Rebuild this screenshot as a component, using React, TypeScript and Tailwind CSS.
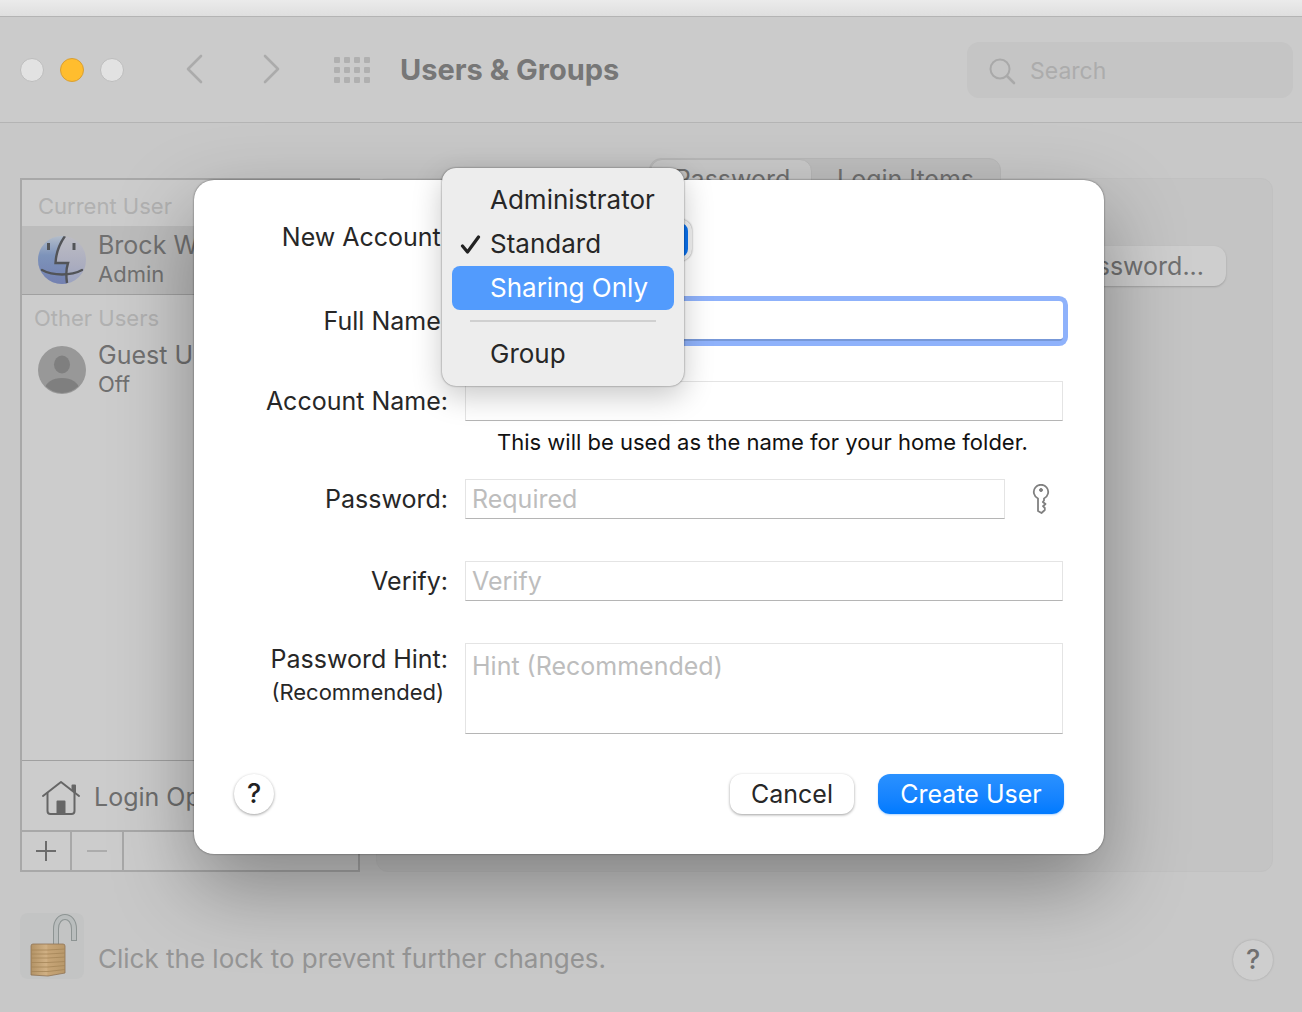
import { useState } from "react";
import type { ReactNode } from "react";

const accountTypes = ["Administrator", "Standard", "Sharing Only"];

const fieldClass =
  "h-10 border border-[#e4e4e4] border-b-[#b5b5b5] bg-white px-1.5 text-[25px] text-[#272727] outline-none placeholder:text-[#bdbdbd]";

interface RowProps {
  id: string;
  label: string;
  children: ReactNode;
}

function Row({ id, label, children }: RowProps) {
  return (
    <div className="flex items-center gap-[17px]">
      <label
        htmlFor={id}
        className="w-[254px] shrink-0 text-right text-[25px] leading-10 text-[#272727]"
      >
        {label}
      </label>
      {children}
    </div>
  );
}

function FinderFace() {
  return (
    <svg viewBox="0 0 48 48" className="size-12 shrink-0">
      <defs>
        <linearGradient id="faceLeft" x1="0" y1="0" x2="0" y2="1">
          <stop offset="0" stopColor="#b3bdca" />
          <stop offset="0.4" stopColor="#7d93ba" />
          <stop offset="1" stopColor="#7380b0" />
        </linearGradient>
        <linearGradient id="faceRight" x1="0" y1="0" x2="0" y2="1">
          <stop offset="0" stopColor="#bdbdc4" />
          <stop offset="0.6" stopColor="#abadbf" />
          <stop offset="1" stopColor="#9ba3c0" />
        </linearGradient>
        <clipPath id="faceClip">
          <circle cx="24" cy="24" r="24" />
        </clipPath>
      </defs>
      <g clipPath="url(#faceClip)">
        <rect width="48" height="48" fill="url(#faceRight)" />
        <path
          d="M0 0H27C22 7 18 17 17.500 27H30C28 33 28 40 29 48H0Z"
          fill="url(#faceLeft)"
        />
        <g fill="none" stroke="#525458" strokeWidth="2.400">
          <path d="M27 0C22 7 18 17 17.500 27H30C28 33 28 40 29 47" />
          <path d="M4 34C15 40 33 40 44 34" strokeLinecap="round" />
          <path d="M10.500 7V14M36 7V14" strokeWidth="3" />
        </g>
      </g>
    </svg>
  );
}

function GuestAvatar() {
  return (
    <svg viewBox="0 0 48 48" className="size-12 shrink-0">
      <clipPath id="guestClip">
        <circle cx="24" cy="24" r="23" />
      </clipPath>
      <circle cx="24" cy="24" r="24" fill="#989898" />
      <g fill="#7f7f7f" clipPath="url(#guestClip)">
        <ellipse cx="24" cy="18.500" rx="8" ry="9" />
        <ellipse cx="24" cy="43" rx="17" ry="11" />
      </g>
    </svg>
  );
}

function HouseIcon() {
  return (
    <svg
      viewBox="0 0 38 36"
      className="h-9 w-[38px] shrink-0"
      fill="none"
      stroke="#666666"
      strokeWidth="2"
      strokeLinecap="round"
      strokeLinejoin="round"
    >
      <path d="M1 16L19 2L37 16" />
      <path d="M5.500 13V31Q5.500 34 8.500 34H29.500Q32.500 34 32.500 31V13" />
      <path d="M30.500 5.500H33V12L30.500 10Z" fill="#666666" />
      <path d="M15.500 21.500H22.500V33H15.500Z" fill="#666666" />
    </svg>
  );
}

function LockIcon() {
  return (
    <svg viewBox="0 0 64 66" className="h-[66px] w-16 shrink-0">
      <defs>
        <linearGradient id="brass" x1="0" y1="0" x2="1" y2="0">
          <stop offset="0" stopColor="#b39366" />
          <stop offset="0.45" stopColor="#d0b084" />
          <stop offset="0.5" stopColor="#c7a577" />
          <stop offset="1" stopColor="#b8986a" />
        </linearGradient>
      </defs>
      <path
        d="M36 32V16C36 0 54 0 54 16V28"
        fill="none"
        stroke="#8d9493"
        strokeWidth="6"
      />
      <path
        d="M36 32V16C36 0 54 0 54 16V27"
        fill="none"
        stroke="#b9bdbd"
        strokeWidth="4"
      />
      <path
        d="M11 33Q11 31 13 31H43Q45 31 45 33V60L28 63L11 62Z"
        fill="url(#brass)"
        stroke="#8f7355"
        strokeWidth="0.800"
      />
      <path
        d="M11 37H28L45 36M11 41H28L45 40M11 45H28L45 44M11 49.500H28L45 48.500M11 54H28L45 52.500M11 58.500H28L45 56.500"
        fill="none"
        stroke="#a58558"
        strokeWidth="0.800"
      />
    </svg>
  );
}

function KeyIcon() {
  return (
    <svg
      viewBox="0 0 18 30"
      className="h-[30px] w-[18px]"
      fill="none"
      stroke="#808080"
      strokeWidth="1.800"
      strokeLinejoin="round"
    >
      <path d="M6 14.500A7.200 7.200 0 1 1 12 14.500V16.500L10.800 18L13.500 20L11 22.200L12.800 24V26L9.500 29L6 27Z" />
      <circle cx="9" cy="6" r="1.500" fill="#808080" strokeWidth="1" />
    </svg>
  );
}

function Toolbar() {
  return (
    <header className="flex h-[107px] items-center border-y border-[#b4b4b4] bg-[#cbcbcb] pr-[9px] pl-5">
      <div className="flex items-center gap-4">
        <button
          type="button"
          aria-label="Close"
          className="size-6 rounded-full border border-[#bdbdbd] bg-[#e2e2e2]"
        />
        <button
          type="button"
          aria-label="Minimize"
          className="size-6 rounded-full border border-[#d89f35] bg-[#ffbd2e]"
        />
        <button
          type="button"
          aria-label="Zoom"
          className="size-6 rounded-full border border-[#bdbdbd] bg-[#e2e2e2]"
        />
      </div>
      <div className="ml-[62px] flex items-center gap-[58px] pb-0.5">
        <button type="button" aria-label="Back">
          <svg viewBox="0 0 18 30" className="h-[30px] w-[18px]" fill="none" stroke="#ababab" strokeWidth="2.600" strokeLinecap="round" strokeLinejoin="round">
            <path d="M15 2L2 15L15 28" />
          </svg>
        </button>
        <button type="button" aria-label="Forward">
          <svg viewBox="0 0 18 30" className="h-[30px] w-[18px]" fill="none" stroke="#ababab" strokeWidth="2.600" strokeLinecap="round" strokeLinejoin="round">
            <path d="M3 2L16 15L3 28" />
          </svg>
        </button>
      </div>
      <button
        type="button"
        aria-label="Show all"
        className="ml-[54px] grid grid-cols-4 gap-1"
      >
        {Array.from({ length: 12 }, (_, key) => (
          <span key={key} className="size-1.5 rounded-[1px] bg-[#b0b0b0]" />
        ))}
      </button>
      <h1 className="ml-[30px] text-[29px] font-bold text-[#777777]">
        Users &amp; Groups
      </h1>
      <label className="ml-auto flex h-14 w-[326px] items-center gap-3.5 rounded-xl bg-[#c5c5c5] pt-1 pl-[22px]">
        <svg viewBox="0 0 27 27" className="size-[27px]" fill="none" stroke="#a9a9a9" strokeWidth="2" strokeLinecap="round">
          <circle cx="11" cy="11" r="9.500" />
          <path d="M18 18L25 25" strokeWidth="2.600" />
        </svg>
        <input
          type="search"
          aria-label="Search"
          placeholder="Search"
          className="min-w-0 flex-1 bg-transparent text-[23px] outline-none placeholder:text-[#acacac]"
        />
      </label>
    </header>
  );
}

function Sidebar() {
  return (
    <aside className="flex w-[340px] shrink-0 flex-col border-2 border-[#a8a8a8] bg-[#cccccc]">
      <h2 className="h-[46px] pt-2 pl-4 text-[22px] leading-9 text-[#b1b1b1]">
        Current User
      </h2>
      <button
        type="button"
        className="flex h-[68px] items-center gap-3 bg-[#bcbcbc] pl-4 text-left"
      >
        <FinderFace />
        <span className="flex flex-col pb-0.5 text-[#707070]">
          <span className="text-[25px] leading-[30px]">Brock W</span>
          <span className="text-[22px] leading-7">Admin</span>
        </span>
      </button>
      <h2 className="h-[42px] border-t border-[#a0a0a0] pt-[5px] pl-3 text-[22px] leading-9 text-[#b1b1b1]">
        Other Users
      </h2>
      <button
        type="button"
        className="flex h-[68px] items-center gap-3 pl-4 text-left"
      >
        <GuestAvatar />
        <span className="flex flex-col pb-0.5 text-[#707070]">
          <span className="text-[25px] leading-[30px]">Guest U</span>
          <span className="text-[22px] leading-7">Off</span>
        </span>
      </button>
      <button
        type="button"
        className="mt-auto flex h-[70px] items-center gap-3.5 border-t border-[#a0a0a0] pt-1 pl-5 text-left text-[25px] text-[#6e6e6e]"
      >
        <HouseIcon />
        Login Op
      </button>
      <div className="flex h-10 border-t-2 border-[#a8a8a8]">
        <button
          type="button"
          aria-label="Add user"
          className="flex w-[50px] items-center justify-center border-r-2 border-[#a8a8a8]"
        >
          <svg viewBox="0 0 22 22" className="size-[22px]" stroke="#6c6c6c" strokeWidth="2">
            <path d="M11 1V21M1 11H21" />
          </svg>
        </button>
        <button
          type="button"
          aria-label="Remove user"
          className="flex w-[52px] items-center justify-center border-r-2 border-[#a8a8a8]"
        >
          <svg viewBox="0 0 22 22" className="size-[22px]" stroke="#acacac" strokeWidth="2">
            <path d="M1 11H21" />
          </svg>
        </button>
      </div>
    </aside>
  );
}

function DetailPanel() {
  return (
    <section className="relative flex-1 rounded-xl border border-[#c1c1c1] bg-[#c4c4c4] px-[46px] pt-[67px]">
      <div className="absolute inset-x-0 -top-[21px] flex justify-center">
        <div className="flex h-11 rounded-xl border border-[#b9b9b9] bg-[#bebebe] text-[25px] text-[#707070]">
          <button
            type="button"
            className="w-[162px] rounded-xl border border-[#b8b8b8] bg-[#cacaca] pl-1"
          >
            Password
          </button>
          <button type="button" className="w-[188px]">
            Login Items
          </button>
        </div>
      </div>
      <div className="flex justify-end">
        <button
          type="button"
          className="h-10 rounded-xl bg-[#cecece] px-[22px] text-[25px] leading-10 text-[#707070] shadow-[0_1px_2px_#9f9f9f]"
        >
          Change Password...
        </button>
      </div>
    </section>
  );
}

function AccountMenu() {
  const [selected, setSelected] = useState("Standard");

  return (
    <div className="relative">
      <select
        id="accountType"
        value={selected}
        onChange={(e) => setSelected(e.target.value)}
        className="h-[42px] w-[227px] appearance-none rounded-xl border-4 border-[#f2f2f2] bg-[#0a72f0] px-2 text-[25px] text-transparent shadow-[0_0_2px_#8c8c8c]"
      >
        {accountTypes.map((type) => (
          <option key={type}>{type}</option>
        ))}
      </select>
      <ul className="absolute -top-[51px] -left-[23px] w-[242px] rounded-[14px] bg-[#ededed] p-2.5 text-[26px] leading-[44px] text-[#272727] shadow-[0_0_2px_#00000090,0_10px_30px_#00000038]">
        {accountTypes.map((type) => (
          <li key={type}>
            <button
              type="button"
              onClick={() => setSelected(type)}
              className={
                type === "Sharing Only"
                  ? "flex h-11 w-full items-center rounded-lg bg-[#529bfd] text-white"
                  : "flex h-11 w-full items-center rounded-lg"
              }
            >
              <span className="flex w-[38px] shrink-0 pl-2">
                {type === selected && (
                  <svg viewBox="0 0 22 20" className="h-5 w-[22px]" fill="none" stroke="#222222" strokeWidth="3.200" strokeLinecap="round" strokeLinejoin="round">
                    <path d="M2.500 12L7.500 18L18.500 3" />
                  </svg>
                )}
              </span>
              {type}
            </button>
          </li>
        ))}
        <li className="mx-[18px] my-2.5 h-[2px] bg-[#d0d0d0]" />
        <li>
          <button type="button" className="h-11 w-full pl-[38px] text-left">
            Group
          </button>
        </li>
      </ul>
    </div>
  );
}

function HelpButton({ dimmed }: { dimmed?: boolean }) {
  return (
    <button
      type="button"
      aria-label="Help"
      className={
        dimmed
          ? "size-10 rounded-full bg-[#cecece] text-[27px] leading-10 font-medium text-[#707070] shadow-[0_0_2px_#9f9f9f]"
          : "size-10 rounded-full bg-white text-[27px] leading-10 font-medium text-[#222222] shadow-[0_1px_3px_#00000060]"
      }
    >
      ?
    </button>
  );
}

function NewAccountDialog() {
  return (
    <form
      role="dialog"
      aria-label="New Account"
      className="flex w-[910px] flex-col rounded-[20px] bg-white pt-[39px] pr-[41px] pb-10 shadow-[0_0_2px_#00000090,0_32px_80px_#00000058]"
    >
      {/* the menu opens over the rows below it */}
      <div className="relative z-10 flex gap-[17px]">
        <label
          htmlFor="accountType"
          className="w-[254px] shrink-0 text-right text-[25px] leading-9 text-[#272727]"
        >
          New Account:
        </label>
        <AccountMenu />
      </div>
      <div className="mt-10">
        <Row id="fullName" label="Full Name:">
          <input
            id="fullName"
            className="h-10 min-w-0 flex-1 rounded-sm border-b-2 border-[#7798d8] bg-white px-1.5 text-[25px] outline-none ring-[5px] ring-[#8fb2fb]"
          />
        </Row>
      </div>
      <div className="mt-10">
        <Row id="accountName" label="Account Name:">
          <input id="accountName" className={`${fieldClass} min-w-0 flex-1`} />
        </Row>
      </div>
      <p className="mt-1 pl-[303px] text-[22px] leading-[34px] text-[#111111]">
        This will be used as the name for your home folder.
      </p>
      <div className="mt-5">
        <Row id="password" label="Password:">
          <input
            id="password"
            type="password"
            placeholder="Required"
            className={`${fieldClass} min-w-0 flex-1`}
          />
          <button
            type="button"
            aria-label="Password Assistant"
            className="flex w-[41px] justify-center pr-1"
          >
            <KeyIcon />
          </button>
        </Row>
      </div>
      <div className="mt-[42px]">
        <Row id="verify" label="Verify:">
          <input
            id="verify"
            type="password"
            placeholder="Verify"
            className={`${fieldClass} min-w-0 flex-1`}
          />
        </Row>
      </div>
      <div className="mt-[42px] flex gap-[17px]">
        <label
          htmlFor="hint"
          className="flex w-[254px] shrink-0 flex-col text-right text-[25px] leading-8 text-[#272727]"
        >
          Password Hint:
          <span className="pr-1 text-[22px] leading-[34px]">
            (Recommended)
          </span>
        </label>
        <textarea
          id="hint"
          placeholder="Hint (Recommended)"
          className="h-[91px] min-w-0 flex-1 resize-none border border-[#e4e4e4] border-b-[#b5b5b5] px-1.5 py-1 text-[25px] leading-9 outline-none placeholder:text-[#bdbdbd]"
        />
      </div>
      <div className="-mr-px mt-10 flex items-center pl-10">
        <HelpButton />
        <button
          type="button"
          className="ml-auto h-10 w-[124px] rounded-xl bg-white text-[25px] leading-10 text-[#272727] shadow-[0_1px_3px_#00000060]"
        >
          Cancel
        </button>
        <button
          type="button"
          className="ml-6 h-10 w-[186px] rounded-xl bg-linear-to-b from-[#2a91ff] to-[#007aff] text-[25px] leading-10 text-white shadow-[0_1px_2px_#007aff50]"
        >
          Create User
        </button>
      </div>
    </form>
  );
}

export default function App() {
  return (
    <div className="flex min-h-screen flex-col bg-linear-to-b from-[#ebebeb] to-[#dedede] to-[17px] font-[Inter,sans-serif]">
      <div className="relative mt-4 flex flex-1 flex-col overflow-hidden bg-[#c8c8c8]">
        <Toolbar />
        <main className="flex flex-1 flex-col pt-[55px] pr-[29px] pb-8 pl-5">
          <div className="flex min-h-[694px] gap-4">
            <Sidebar />
            <DetailPanel />
          </div>
          <footer className="mt-10 flex items-center">
            <button
              type="button"
              aria-label="Lock"
              className="rounded-lg bg-[#c3c4c4]"
            >
              <LockIcon />
            </button>
            <p className="mt-6 ml-3.5 text-[26px] text-[#959595]">
              Click the lock to prevent further changes.
            </p>
            <span className="mt-7 ml-auto">
              <HelpButton dimmed />
            </span>
          </footer>
        </main>
        <div className="absolute inset-x-0 top-[164px] flex justify-center pr-1">
          <NewAccountDialog />
        </div>
      </div>
    </div>
  );
}
